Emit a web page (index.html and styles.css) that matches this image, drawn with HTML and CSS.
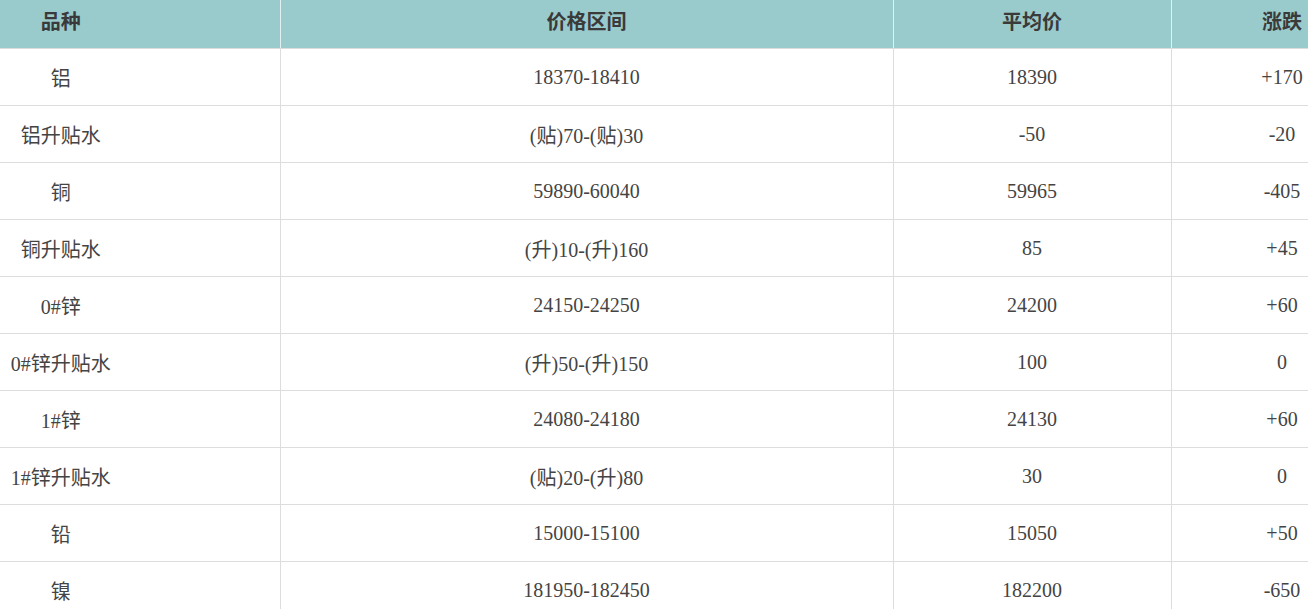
FILE: index.html
```html
<!DOCTYPE html>
<html lang="zh">
<head>
<meta charset="utf-8">
<title>价格表</title>
<link rel="stylesheet" href="styles.css">
</head>
<body>
<div class="wrap">
<table class="price">
<colgroup>
<col class="c1"><col class="c2"><col class="c3"><col class="c4">
</colgroup>
<thead>
<tr><th class="name">品种</th><th>价格区间</th><th>平均价</th><th>涨跌</th></tr>
</thead>
<tbody>
<tr><td class="name">铝</td><td>18370-18410</td><td>18390</td><td>+170</td></tr>
<tr><td class="name">铝升贴水</td><td>(贴)70-(贴)30</td><td>-50</td><td>-20</td></tr>
<tr><td class="name">铜</td><td>59890-60040</td><td>59965</td><td>-405</td></tr>
<tr><td class="name">铜升贴水</td><td>(升)10-(升)160</td><td>85</td><td>+45</td></tr>
<tr><td class="name">0#锌</td><td>24150-24250</td><td>24200</td><td>+60</td></tr>
<tr><td class="name">0#锌升贴水</td><td>(升)50-(升)150</td><td>100</td><td>0</td></tr>
<tr><td class="name">1#锌</td><td>24080-24180</td><td>24130</td><td>+60</td></tr>
<tr><td class="name">1#锌升贴水</td><td>(贴)20-(升)80</td><td>30</td><td>0</td></tr>
<tr><td class="name">铅</td><td>15000-15100</td><td>15050</td><td>+50</td></tr>
<tr><td class="name">镍</td><td>181950-182450</td><td>182200</td><td>-650</td></tr>
</tbody>
</table>
</div>
</body>
</html>
```
FILE: styles.css
```css
html, body {
  margin: 0;
  padding: 0;
  background: #fff;
  overflow: hidden;
}
.wrap {
  width: 1308px;
  height: 609px;
  overflow: hidden;
}
.price {
  border-collapse: collapse;
  table-layout: fixed;
  width: 1393px;
  font-family: "Liberation Serif", "Noto Sans CJK SC", serif;
  font-size: 20px;
  color: #444;
}
.c1 { width: 280px; }
.c2 { width: 613px; }
.c3 { width: 278px; }
.c4 { width: 222px; }
.price th,
.price td {
  padding: 0;
  text-align: center;
  vertical-align: middle;
  white-space: nowrap;
}
.price th {
  height: 48px;
  background: #9acbcc;
  color: #3a3a3a;
  font-weight: bold;
  border-right: 1px solid #e4f0f0;
  border-bottom: 1px solid #dcdcdc;
  padding-bottom: 7px;
  box-sizing: border-box;
}
.price td {
  height: 57px;
  box-sizing: border-box;
  border-right: 1px solid #dddddd;
  border-bottom: 1px solid #dddddd;
  font-size: 20px;
  padding-top: 2px;
}
.price .name {
  padding-right: 158px;
}
```
